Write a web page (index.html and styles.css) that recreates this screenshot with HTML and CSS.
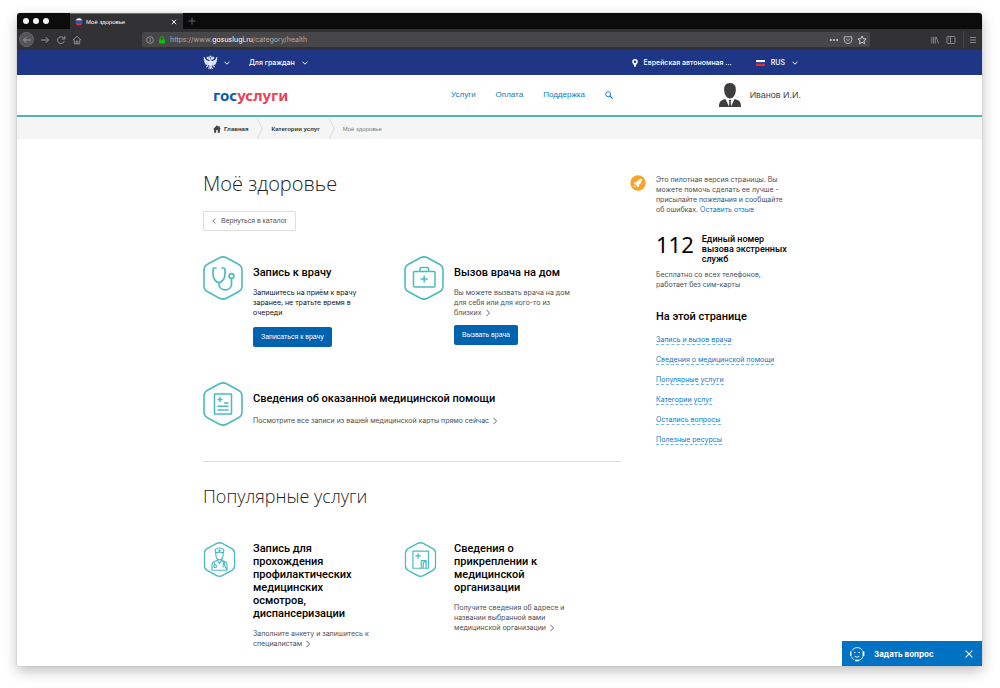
FILE: index.html
```html
<!DOCTYPE html>
<html lang="ru">
<head>
<meta charset="utf-8">
<title>Моё здоровье</title>
<link rel="stylesheet" href="styles.css">
</head>
<body>
<svg class="defs" width="0" height="0" aria-hidden="true">
  <defs>
    <symbol id="chev-down" viewBox="0 0 8 8"><path d="M1.500 2.700L4 5.200 6.500 2.700" fill="none" stroke="currentColor"/></symbol>
    <symbol id="chev-right" viewBox="0 0 8 8"><path d="M2.500 .8L5.500 4 2.500 7.200" fill="none" stroke="currentColor" stroke-width=".8"/></symbol>
    <symbol id="hex" viewBox="0 0 40 44"><path d="M16.500 1.800Q20 0 23.500 1.800L35.500 8.300Q39 10.200 39 14V30Q39 33.800 35.500 35.700L23.500 42.200Q20 44 16.500 42.200L4.500 35.700Q1 33.800 1 30V14Q1 10.200 4.500 8.300Z" fill="none" stroke="currentColor"/></symbol>
  </defs>
</svg>
<div class="window">
  <div class="tabs">
    <span class="dots"><i></i><i></i><i></i></span>
    <div class="tab">
      <svg class="favicon" viewBox="0 0 8 8"><path d="M.6 2.600A3.700 3.700 0 0 1 7.400 2.600Z" fill="#fff"/><path d="M.5 2.600H7.500V5.200H.5Z" fill="#2a50b8"/><path d="M.6 5.200H7.400A3.700 3.700 0 0 1 .6 5.200Z" fill="#e2333b"/></svg>
      <span>Моё здоровье</span>
      <button class="bare tab-close" aria-label="Закрыть вкладку"><svg viewBox="0 0 8 8"><path d="M1.800 1.800L6.200 6.200M6.200 1.800L1.800 6.200" stroke="#eee"/></svg></button>
    </div>
    <button class="bare tab-new" aria-label="Новая вкладка"><svg viewBox="0 0 8 8"><path d="M4 .5V7.500M.5 4H7.500" stroke="#777" stroke-width=".8"/></svg></button>
  </div>
  <div class="toolbar">
    <button class="bare back" aria-label="Назад"><svg viewBox="0 0 10 10"><path d="M9 5H1.500M4.500 2L1.500 5 4.500 8" fill="none" stroke="#999"/></svg></button>
    <button class="bare tool" aria-label="Вперёд"><svg viewBox="0 0 10 10"><path d="M1 5H8.500M5.500 2L8.500 5 5.500 8" fill="none" stroke="#999"/></svg></button>
    <button class="bare tool" aria-label="Обновить"><svg viewBox="0 0 10 10"><path d="M8 3.500A3.400 3.400 0 1 0 8.200 6.300M8.800 1V4H5.800" fill="none" stroke="#999"/></svg></button>
    <button class="bare tool" aria-label="Домой"><svg viewBox="0 0 10 10"><path d="M.8 5.200L5 1.300 9.200 5.200M2.300 4.500V8.800H7.700V4.500M4.200 8.800V6H5.800V8.800" fill="none" stroke="#999" stroke-width=".9"/></svg></button>
    <div class="address">
      <svg class="i8" viewBox="0 0 8 8"><circle cx="4" cy="4" r="3.400" fill="none" stroke="#aaa" stroke-width=".7"/><path d="M4 3.500V6M4 2V2.800" stroke="#aaa" stroke-width=".8"/></svg>
      <svg class="i8" viewBox="0 0 8 8"><path d="M1 3.500H7V7.600H1Z" fill="#12bc00"/><path d="M2.300 3.800V2.400A1.700 1.700 0 0 1 5.700 2.400V3.800" fill="none" stroke="#12bc00"/></svg>
      <span class="url">https://www.<b>gosuslugi.ru</b>/category/health</span>
      <svg class="i10" viewBox="0 0 10 10"><g fill="#ccc"><circle cx="1.800" cy="5" r="1.100"/><circle cx="5" cy="5" r="1.100"/><circle cx="8.200" cy="5" r="1.100"/></g></svg>
      <svg class="i10" viewBox="0 0 10 10"><path d="M1.200 1.800H8.800V4.800A3.800 3.800 0 0 1 1.200 4.800ZM3.200 4L5 5.700 6.800 4" fill="none" stroke="#bbb"/></svg>
      <svg class="i10" viewBox="0 0 10 10"><path d="M5 1L6.200 3.700 9.100 4 6.900 5.900 7.600 8.800 5 7.300 2.400 8.800 3.100 5.900 .9 4 3.800 3.700Z" fill="none" stroke="#ccc"/></svg>
    </div>
    <div class="tools-right">
      <svg class="i8" viewBox="0 0 8 8"><path d="M.8 .8V7.500M2.600 .8V7.500M4.300 .8V7.500M5.300 1L7.500 7.500" stroke="#888"/></svg>
      <svg class="i10" viewBox="0 0 10 10"><rect x="1" y="1.500" width="8" height="7" rx="1" fill="none" stroke="#888"/><path d="M4.500 1.500V8.500" stroke="#888"/><path d="M2.300 3.500H3.500M2.300 5H3.500" stroke="#888" stroke-width=".6"/></svg>
      <svg class="i8 burger" viewBox="0 0 8 8"><path d="M1 1.500H7M1 4H7M1 6.500H7" stroke="#888"/></svg>
    </div>
  </div>

  <div class="topbar">
    <div class="container topbar-row">
      <svg class="eagle" viewBox="0 0 16 16"><g fill="none" stroke="#e8ecf8" stroke-width="1.100"><path d="M7 4.500Q4 4 4.500 2.500L6.500 2.200 7.500 5V8"/><path d="M9 4.500Q12 4 11.500 2.500L9.500 2.200 8.500 5V8"/><path d="M6 7Q2 6 1 2.200M6 8Q2.500 7.500 1 4.500M6 9Q3 9 1.400 6.800M6 10Q4 10.500 2.300 9"/><path d="M10 7Q14 6 15 2.200M10 8Q13.500 7.500 15 4.500M10 9Q13 9 14.600 6.800M10 10Q12 10.500 13.700 9"/><path d="M5.500 11L3.500 13M10.500 11L12.500 13M7 12L6 15M9 12L10 15M8 12V15"/></g><path d="M5.500 6.500H10.500V10.500Q8 13.500 5.500 10.500Z" fill="#e8ecf8"/><path d="M7 .8H9L8.700 2.300H7.300Z" fill="#e8ecf8"/></svg>
      <svg class="i8 chev-eagle"><use href="#chev-down"/></svg>
      <button class="bare aud">Для граждан <svg class="i8"><use href="#chev-down"/></svg></button>
      <button class="bare region"><svg class="pin" viewBox="0 0 6 8"><path fill-rule="evenodd" d="M3 0A2.800 2.800 0 0 1 5.800 2.800C5.800 4.600 3.800 5.500 3.500 8H2.500C2.200 5.500 .2 4.600 .2 2.800A2.800 2.800 0 0 1 3 0ZM3 1.600A1.200 1.200 0 1 0 3 4 1.200 1.200 0 1 0 3 1.600Z" fill="#fff"/></svg>Еврейская автономная ...</button>
      <button class="bare lang"><span class="flag"></span>RUS <svg class="i8"><use href="#chev-down"/></svg></button>
    </div>
  </div>

  <header class="header">
    <div class="container header-row">
      <a class="logo" href="#"><span>гос</span>услуги</a>
      <nav class="nav"><a href="#">Услуги</a><a href="#">Оплата</a><a href="#">Поддержка</a><a href="#" aria-label="Поиск"><svg class="i8" viewBox="0 0 8 8"><circle cx="3.200" cy="3.200" r="2.500" fill="none" stroke="#0b78c8" stroke-width=".9"/><path d="M5 5L7.600 7.600" stroke="#0b78c8" stroke-width="1.100"/></svg></a></nav>
      <a class="user" href="#"><svg class="avatar" viewBox="0 0 22 24"><path d="M11 0C15.200 0 17.200 2.800 16.800 7.500 16.500 12 14 15.500 11 15.500S5.500 12 5.200 7.500C4.800 2.800 6.800 0 11 0ZM0 24C0 18.500 2 17 6.500 16L10 23.500 10.300 18.500 9.600 17H12.400L11.700 18.500 12 23.500 15.500 16C20 17 22 18.500 22 24Z" fill="#3e3e3e"/></svg>Иванов И.И.</a>
    </div>
  </header>

  <nav class="crumbs">
    <div class="container crumbs-row">
      <a href="#"><svg class="i8" viewBox="0 0 8 8"><path d="M4 .3L0 4.300H1.100V7.700H3.200V5H4.800V7.700H6.900V4.300H8L6.700 3V1H5.600V1.900Z" fill="#444"/></svg>Главная</a>
      <svg class="sep" viewBox="0 0 6 21"><path d="M0 0L5 10.500 0 21" fill="none" stroke="#ddd"/></svg>
      <a href="#">Категории услуг</a>
      <svg class="sep" viewBox="0 0 6 21"><path d="M0 0L5 10.500 0 21" fill="none" stroke="#ddd"/></svg>
      <span>Моё здоровье</span>
    </div>
  </nav>

  <div class="container page">
    <main class="main">
      <h1>Моё здоровье</h1>
      <a class="catalog" href="#"><svg viewBox="0 0 4 6"><path d="M3.400 .5L.8 3 3.400 5.500" fill="none" stroke="#555" stroke-width=".8"/></svg>Вернуться в каталог</a>

      <div class="cards">
        <article class="card">
          <svg class="hex" viewBox="0 0 40 44"><use href="#hex" stroke-width="1.600"/><g fill="none" stroke="currentColor" stroke-width="1.700" stroke-linecap="round"><path d="M13 12H11.500Q10 12 10 13.500V18C10 22 12.500 26.500 16 26.500S22 22 22 18V13.500Q22 12 20.500 12H19"/><path d="M16 26.500V29A6.300 5.500 0 0 0 28.500 29V22.500"/><circle cx="28.500" cy="20" r="2.400"/></g></svg>
          <div>
            <h3>Запись к врачу</h3>
            <p class="dark">Запишитесь на приём к врачу заранее, не тратьте время в очереди</p>
            <button class="action">Записаться к врачу</button>
          </div>
        </article>
        <article class="card">
          <svg class="hex" viewBox="0 0 40 44"><use href="#hex" stroke-width="1.600"/><g fill="none" stroke="currentColor" stroke-width="1.500"><rect x="9.500" y="15.500" width="21.500" height="15.500" rx="1"/><path d="M16 15.500V13Q16 11.500 17.500 11.500H23Q24.500 11.500 24.500 13V15.500M20.200 19.500V26.500M16.700 23H23.700"/></g></svg>
          <div>
            <h3>Вызов врача на дом</h3>
            <p class="snug">Вы можете вызвать врача на дом для себя или для кого-то из близких&nbsp;<svg class="more"><use href="#chev-right"/></svg></p>
            <button class="action">Вызвать врача</button>
          </div>
        </article>
        <article class="card wide">
          <svg class="hex" viewBox="0 0 40 44"><use href="#hex" stroke-width="1.600"/><g fill="none" stroke="currentColor" stroke-width="1.500"><rect x="11.500" y="12" width="17" height="20" rx=".5"/><path d="M17 15V20M14.500 17.500H19.500M21 21H25.500M14.500 24.200H25.500M14.500 28H25.500"/></g></svg>
          <div>
            <h3>Сведения об оказанной медицинской помощи</h3>
            <p class="airy">Посмотрите все записи из вашей медицинской карты прямо сейчас&nbsp;<svg class="more"><use href="#chev-right"/></svg></p>
          </div>
        </article>
      </div>

      <h2>Популярные услуги</h2>
      <div class="cards popular">
        <article class="card">
          <svg class="hex small" viewBox="0 0 40 44"><use href="#hex" stroke-width="1.800"/><g fill="none" stroke="currentColor" stroke-width="1.400"><path d="M15 13.500L14.500 9.500Q20 5.500 25.500 9.500L25 13.500Q20 12 15 13.500ZM15.500 13.500V17Q16 22 20 22.500 24 22 24.500 17V13.500M18.500 10.500H21.500M20 9V12"/><path d="M10.500 35.500V29Q10.500 25.500 13.500 24.500L17.500 23V21.500M22.500 21.500V23L26.500 24.500Q29.500 25.500 29.500 29V35.500ZM17.500 23L20 27 22.500 23M13.500 25V29M26.500 25V28M10.500 35.500H29.500"/><circle cx="14.500" cy="30.500" r="1.700"/><path d="M24.500 32V30Q24.500 28 26.500 28"/></g></svg>
          <div>
            <h3>Запись для прохождения профилактических медицинских осмотров, диспансеризации</h3>
            <p>Заполните анкету и запишитесь к специалистам&nbsp;<svg class="more"><use href="#chev-right"/></svg></p>
          </div>
        </article>
        <article class="card">
          <svg class="hex small" viewBox="0 0 40 44"><use href="#hex" stroke-width="1.800"/><g fill="none" stroke="currentColor" stroke-width="1.500"><path d="M10.500 11.500H30V33H10.500ZM17 14V21M13.500 17.500H20.500M21 33V23.500H27V33M23.500 33V26L27 23.500"/></g></svg>
          <div>
            <h3>Сведения о прикреплении к медицинской организации</h3>
            <p>Получите сведения об адресе и названии выбранной вами медицинской организации&nbsp;<svg class="more"><use href="#chev-right"/></svg></p>
          </div>
        </article>
      </div>
    </main>

    <aside class="aside">
      <div class="pilot">
        <svg class="rocket" viewBox="0 0 16 16"><circle cx="8" cy="8" r="7.700" fill="#fca226"/><path d="M12 3.700C9.500 3.700 7.800 5 6.500 7L4.500 7.200 3.700 9 5.500 9.200 7 10.700 7.200 12.400 9 11.500 9.200 9.500C11.200 8.200 12 6.200 12 3.700ZM4.600 10L3.700 12.300 6 11.500Z" fill="#fff"/></svg>
        <p>Это пилотная версия страницы. Вы можете помочь сделать ее лучше - присылайте пожелания и сообщайте об&nbsp;ошибках. <a href="#">Оставить отзыв</a></p>
      </div>
      <div class="aside-body">
        <div class="emergency"><strong>112</strong><span>Единый номер вызова экстренных служб</span></div>
        <p class="free">Бесплатно со всех телефонов, работает без сим-карты</p>
        <h3>На этой странице</h3>
        <ul class="toc">
          <li><a href="#">Запись и вызов врача</a></li>
          <li><a href="#">Сведения о медицинской помощи</a></li>
          <li><a href="#">Популярные услуги</a></li>
          <li><a href="#">Категории услуг</a></li>
          <li><a href="#">Остались вопросы</a></li>
          <li><a href="#">Полезные ресурсы</a></li>
        </ul>
      </div>
    </aside>
  </div>

  <div class="chat">
    <svg class="face" viewBox="0 0 16 16"><g fill="none" stroke="#fff" stroke-width=".9"><path d="M3 4.500A6.200 6.200 0 0 1 13.500 4.500M2.300 10.500A6.300 6.300 0 0 0 5 13.600M14 5V10.500Q13 13.500 10 14.400M5.500 10.200Q8 12.200 10.500 10.200"/><path d="M1.800 5.500V10M14.700 5.500V10" stroke-width="1.400"/></g><path d="M6 13.700H10V15.300H6Z" fill="#fff"/><circle cx="5.700" cy="6.500" r=".8" fill="#fff"/><circle cx="10.300" cy="6.500" r=".8" fill="#fff"/></svg>
    <button class="bare ask">Задать вопрос</button>
    <button class="bare chat-close" aria-label="Закрыть"><svg viewBox="0 0 8 8"><path d="M.6 .6L7.400 7.400M7.400 .6L.6 7.400" stroke="#fff" stroke-width="1.100"/></svg></button>
  </div>
</div>
</body>
</html>
```
FILE: styles.css
```css
* { box-sizing: border-box; }
body {
  margin: 0;
  min-height: 100vh;
  padding: 13px 18px 22px 17px;
  display: flex;
  background: #fff;
  color: #4a5058;
  font: 7px/10px Inter, "Liberation Sans", Arial, sans-serif;
}
h1, h2, h3, p, ul { margin: 0; padding: 0; }
a { color: #0b78c8; text-decoration: none; }
svg { display: block; flex: none; }
.defs { position: absolute; }
.bare { display: flex; align-items: center; padding: 0; border: 0; background: none; color: inherit; font: inherit; }
.i8 { width: 8px; height: 8px; }
.i10 { width: 10px; height: 10px; }

.window {
  position: relative;
  flex: 1;
  min-width: 0;
  background: #fff;
  border-radius: 3px 3px 0 0;
  box-shadow: 0 0 1px rgba(0, 0, 0, .5), 0 5px 14px rgba(0, 0, 0, .25);
}
.container { max-width: 603px; margin: 0 auto; padding-left: 5px; }

.tabs { display: flex; align-items: center; height: 16px; background: #0c0c0d; border-radius: 3px 3px 0 0; }
.dots { display: flex; gap: 4px; width: 53px; padding-left: 6px; }
.dots i { width: 6px; height: 6px; border-radius: 50%; background: #f2f2f2; }
.tab { display: flex; align-items: center; gap: 3px; width: 113px; height: 16px; padding: 0 5px; background: #323234; border-top: 1px solid #2a84e0; color: #fff; font: 6px/10px "Liberation Sans", Arial, sans-serif; }
.favicon { width: 8px; height: 8px; }
.tab-close { margin-left: auto; }
.tab-close svg, .tab-new svg { width: 8px; height: 8px; }
.tab-new { margin-left: 5px; }
.toolbar { display: flex; align-items: center; gap: 6px; height: 21px; padding: 0 5px 0 2px; background: #323234; }
.back { justify-content: center; width: 15px; height: 15px; border-radius: 50%; background: #555557; border: 1px solid #68686a; }
.back svg, .tool svg { width: 10px; height: 10px; }
.tool + .tool { margin-right: 0; }
.address { display: flex; align-items: center; gap: 4px; width: 728px; height: 15px; margin-left: 54px; padding: 0 3px 0 4px; border-radius: 2px; background: #474749; color: #aaa; }
.url { flex: 1; }
.url b { color: #fff; font-weight: 400; }
.tools-right { display: flex; align-items: center; gap: 7px; margin-left: auto; height: 17px; }
.burger { box-sizing: content-box; padding: 5px 0 4px 5px; border-left: 1px solid #48484a; }

.topbar { background: #1e3685; color: #fff; font-weight: 500; }
.topbar-row { display: flex; align-items: center; height: 25px; }
.eagle { width: 15px; height: 15px; }
.chev-eagle { margin: 0 18px 0 5px; }
.aud, .lang { gap: 6px; }
.region { gap: 5px; margin-left: auto; }
.pin { width: 6px; height: 8px; }
.lang { margin: 0 2px 0 24px; }
.flag { width: 9px; height: 6px; background: linear-gradient(#fff 33%, #2247a8 33% 66%, #dc3030 66%); }

.header { border-bottom: 2px solid #4cb8b8; }
.header-row { display: flex; align-items: center; height: 40px; }
.logo { width: 238px; padding-left: 10px; color: #ee3f58; font: 700 15px/20px "Noto Sans", "Open Sans", sans-serif; }
.logo span { color: #0d5cab; }
.nav { display: flex; align-items: center; gap: 20px; margin-left: 10px; font: 8px/10px "Liberation Sans", Arial, sans-serif; }
.user { display: flex; align-items: center; gap: 9px; margin-left: auto; color: #444; font: 9px/10px "Liberation Sans", Arial, sans-serif; }
.avatar { width: 22px; height: 24px; }

.crumbs { margin-top: 1px; background: #f5f5f5; font: 6px/10px "Liberation Sans", Arial, sans-serif; }
.crumbs-row { display: flex; align-items: center; height: 21px; }
.crumbs-row a { display: flex; gap: 3px; align-items: center; color: #333; font-weight: 700; }
.crumbs-row a:first-child { margin-left: 10px; }
.crumbs-row span { color: #777; }
.sep { width: 6px; height: 21px; margin: 0 8px 0 9px; }

.page { display: flex; align-items: flex-start; justify-content: space-between; padding-top: 32px; padding-bottom: 16px; }
.main { width: 418px; }
h1, h2 { color: #222; font: 300 20px/26px "Open Sans", "Noto Sans", sans-serif; }
h2 { margin-top: 21px; font-size: 18px; }
h3 { color: #000; font: 500 11px/13px Roboto, "Noto Sans", sans-serif; }
.catalog { display: inline-flex; align-items: center; gap: 5px; height: 20px; margin-top: 14px; padding: 0 8px; border: 1px solid #ddd; border-radius: 2px; color: #555; font: 7px/10px "Liberation Sans", Arial, sans-serif; }
.catalog svg { width: 4px; height: 6px; }
.cards { display: grid; grid-template-columns: 201px 1fr; row-gap: 35px; margin-top: 25px; padding-bottom: 35px; border-bottom: 1px solid #ddd; }
.card { display: grid; grid-template-columns: 40px 1fr; column-gap: 10px; align-items: start; }
.card > div { max-width: 125px; padding-top: 10px; }
.card p { margin-top: 9px; }
.card .dark { color: #111; }
.card .airy { margin-top: 11px; }
.wide { grid-column: 1 / -1; }
.card.wide > div { max-width: none; }
.hex { width: 40px; height: 44px; color: #4abcc0; }
.small { width: 33px; height: 35px; }
.more { display: inline-block; width: 8px; height: 8px; vertical-align: -2px; color: #444; }
.action { height: 20px; margin-top: 9px; padding: 0 8px; border: 0; border-radius: 2px; background: #0063b0; color: #fff; font: 7px/10px "Liberation Sans", Arial, sans-serif; }
.snug + .action { margin-top: 7px; }
.popular { margin-top: 33px; padding-bottom: 0; border: 0; }
.popular .card > div { padding-top: 0; }

.aside { width: 171px; padding-top: 4px; }
.pilot { display: grid; grid-template-columns: 16px 1fr; column-gap: 10px; }
.rocket { width: 16px; height: 16px; }
.aside-body { padding-left: 26px; }
.emergency { display: flex; gap: 8px; margin: 19px 0 6px; color: #000; font: 500 9px/10px Roboto, "Noto Sans", sans-serif; }
.emergency strong { font: 400 22px/20px "Noto Sans", "Open Sans", sans-serif; }
.emergency span { max-width: 90px; }
.free { max-width: 125px; }
.aside h3 { margin: 20px 0 12px; }
.toc { display: grid; gap: 10px; list-style: none; }
.toc a { border-bottom: 1px dashed #7ab8e2; }

.chat { position: absolute; right: 0; bottom: 0; display: flex; align-items: center; width: 140px; height: 25px; padding: 0 9px 0 7px; background: #0072c4; color: #fff; }
.face { width: 16px; height: 16px; }
.ask { margin-left: 9px; font-weight: 700; font-size: 8px; }
.chat-close { margin-left: auto; }
.chat-close svg { width: 8px; height: 8px; }
```
